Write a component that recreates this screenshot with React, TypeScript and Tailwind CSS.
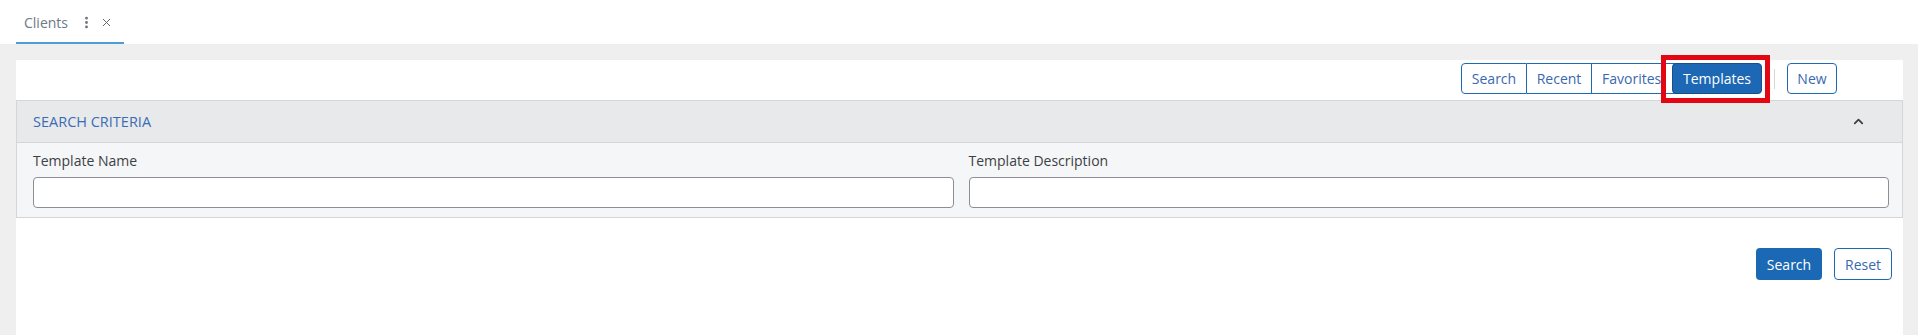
import { ChevronUp, EllipsisVertical, X } from "lucide-react";

const outlineBtn =
  "h-[31px] border border-[#1f68b3] bg-white text-[14px] text-[#3a68b0] flex items-center justify-center";

function Field({ label }: { label: string }) {
  return (
    <div className="flex flex-col">
      <label className="h-[30px] pt-[9px] text-[14px] leading-[18px] text-[#3c3f44]">{label}</label>
      <input className="mt-[4px] h-[31px] rounded-[4px] border border-[#8a8f96] bg-white px-2 text-[14px] outline-none" />
    </div>
  );
}

export default function App() {
  return (
    <div className="flex h-[335px] w-[1918px] flex-col overflow-hidden bg-white font-['Open_Sans',sans-serif]">
      <div className="flex h-[44px] items-end pl-4">
        <div className="flex h-full w-[108px] items-center border-b-2 border-[#4a9fd6] pl-2 pt-[2px] text-[14px] text-[#6f7984]">
          <span>Clients</span>
          <EllipsisVertical size={15} strokeWidth={2.5} className="ml-[11px] text-[#6b7078]" />
          <X size={13} strokeWidth={1.8} className="ml-[6px] text-[#5e636a]" />
        </div>
      </div>

      <div className="flex flex-1 flex-col bg-[#efefef] pl-4 pr-[15px] pt-4">
        <div className="flex flex-1 flex-col bg-white">
          <div className="flex h-[40px] items-start justify-end pr-[66px] pt-[3px]">
            <div className="flex">
              <button className={`${outlineBtn} w-[66px] rounded-l-[4px]`}>Search</button>
              <button className={`${outlineBtn} w-[65px] border-l-0`}>Recent</button>
              <button className={`${outlineBtn} w-[86px] justify-start border-l-0 pl-[10px]`}>Favorites</button>
              <div className="relative z-10 -ml-[6px]">
                <button className="flex h-[31px] w-[90px] items-center justify-center rounded-[4px] border border-[#164f8c] bg-[#1d68b4] text-[14px] text-white">
                  Templates
                </button>
                <div className="pointer-events-none absolute -bottom-[9px] -left-[11px] -right-[8px] -top-[8px] border-[5px] border-[#e30613]" />
              </div>
            </div>
            <div className="ml-[12px] mr-[12px] mt-[6px] h-[20px] w-px bg-[#d4d6d9]" />
            <button className={`${outlineBtn} w-[50px] rounded-[4px]`}>New</button>
          </div>

          <div className="border border-[#d3d6da]">
            <div className="flex h-[42px] items-center justify-between border-b border-[#d3d6da] bg-[#e8e9eb] pl-4 pr-[36px]">
              <span className="text-[14.5px] text-[#3a6cb5]">SEARCH CRITERIA</span>
              <ChevronUp size={15} strokeWidth={2.8} className="text-[#3a3f46]" />
            </div>
            <div className="grid grid-cols-2 gap-[15px] bg-[#f5f6f8] pb-[9px] pl-4 pr-[13px]">
              <Field label="Template Name" />
              <Field label="Template Description" />
            </div>
          </div>

          <div className="flex justify-end gap-3 pr-[11px] pt-[30px]">
            <button className="h-[32px] w-[66px] rounded-[4px] bg-[#1b68b4] text-[14px] text-white">Search</button>
            <button className="h-[32px] w-[58px] rounded-[4px] border border-[#1f68b3] bg-white text-[14px] text-[#3a68b0]">
              Reset
            </button>
          </div>
        </div>
      </div>
    </div>
  );
}
